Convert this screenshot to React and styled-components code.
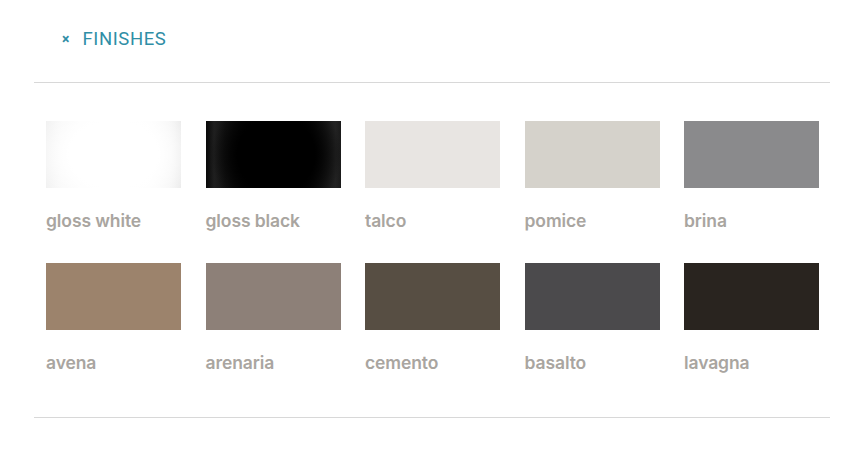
import React from "react";
import styled, { createGlobalStyle } from "styled-components";

const GlobalStyle = createGlobalStyle`
  html, body {
    margin: 0;
    padding: 0;
    background: #ffffff;
  }
  body {
    font-family: Inter, "Liberation Sans", sans-serif;
  }
`;

const Panel = styled.section`
  width: 796px;
  margin-left: 34px;
  padding-top: 28px;
`;

const Header = styled.button`
  display: flex;
  align-items: center;
  gap: 13px;
  padding: 0 0 0 28px;
  height: 22px;
  border: 0;
  background: none;
  color: #2f8ea6;
  font-family: Roboto, "Liberation Sans", sans-serif;
  font-size: 18.5px;
  letter-spacing: 0.6px;
  cursor: pointer;
`;

const Close = styled.span`
  font-size: 14px;
  font-weight: 700;
  line-height: 1;
  letter-spacing: 0;
`;

const Divider = styled.hr`
  margin: 0;
  border: 0;
  border-top: 1px solid #d8d8d8;
`;

const Body = styled.div`
  padding: 38px 11px 12px 12px;
  border-top: 1px solid #d8d8d8;
  margin-top: 32px;
`;

const Grid = styled.div`
  display: grid;
  grid-template-columns: repeat(5, 1fr);
  column-gap: 24.5px;
`;

const Item = styled.div`
  display: flex;
  flex-direction: column;
  height: 142px;
`;

const Swatch = styled.div`
  height: 67px;
  background: ${(p) => p.$fill};
`;

const Label = styled.div`
  margin-top: 22px;
  font-size: 17.5px;
  font-weight: 600;
  color: #a9a5a0;
  letter-spacing: -0.1px;
`;

const finishes = [
  {
    name: "gloss white",
    fill: "radial-gradient(ellipse 60% 90% at 50% 50%, #ffffff 55%, rgba(255,255,255,0) 100%), linear-gradient(90deg, #f1f1f1 0%, #f7f7f7 10%, #fcfcfc 30%, #fdfdfd 75%, #f5f5f5 92%, #ececec 100%)",
  },
  {
    name: "gloss black",
    fill: "radial-gradient(ellipse 48% 95% at 52% 50%, #000000 60%, rgba(0,0,0,0) 100%), linear-gradient(90deg, #080808 0%, #1f1f1f 6%, #141414 14%, #050505 30%, #020202 70%, #161616 86%, #222222 96%, #1a1a1a 100%)",
  },
  { name: "talco", fill: "#e8e5e2" },
  { name: "pomice", fill: "#d5d2cb" },
  { name: "brina", fill: "#8a8a8c" },
  { name: "avena", fill: "#9c836c" },
  { name: "arenaria", fill: "#8d8078" },
  { name: "cemento", fill: "#574e43" },
  { name: "basalto", fill: "#4b4a4c" },
  { name: "lavagna", fill: "#29241f" },
];

export default function App() {
  return (
    <>
      <GlobalStyle />
      <Panel>
        <Header>
          <Close>×</Close>
          FINISHES
        </Header>
        <Body>
          <Grid>
            {finishes.map((f) => (
              <Item key={f.name}>
                <Swatch $fill={f.fill} />
                <Label>{f.name}</Label>
              </Item>
            ))}
          </Grid>
        </Body>
        <Divider />
      </Panel>
    </>
  );
}
